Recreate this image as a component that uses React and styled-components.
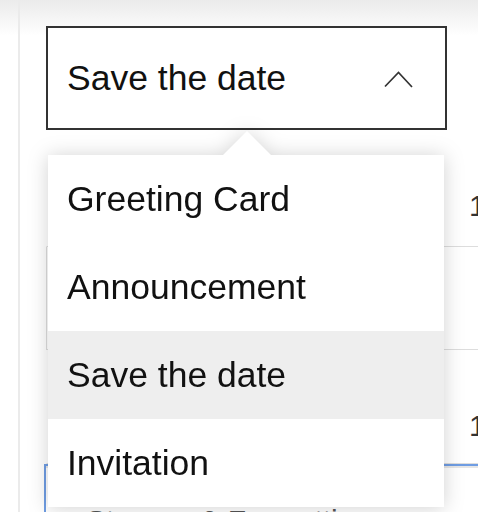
import React from "react";
import styled, { createGlobalStyle } from "styled-components";

const Global = createGlobalStyle`
  html, body { margin: 0; padding: 0; overflow: hidden; background: #fff; }
  body { font-family: "Liberation Sans", Arial, sans-serif; }
`;

const Page = styled.div`
  width: 478px;
  height: 512px;
  overflow: hidden;
  display: flex;
  background: linear-gradient(#ebebeb 0px, #ffffff 36px);
`;

const Gutter = styled.div`
  width: 18px;
  flex: none;
`;

const Main = styled.main`
  flex: 1;
  min-width: 0;
  border-left: 2px solid #ebebeb;
  padding: 26px 0 0 26px;
`;

const Field = styled.div`
  position: relative;
  width: 401px;
  z-index: 2;
`;

const SelectBox = styled.div`
  box-sizing: border-box;
  height: 104px;
  border: 2px solid #333;
  background: #fff;
  display: flex;
  align-items: center;
  justify-content: space-between;
  padding: 0 31px 0 19px;
  font-size: 35.5px;
  color: #111;
`;

const Chevron = styled.svg`
  width: 30px;
  height: 17px;
  margin-top: 3px;
`;

const Menu = styled.ul`
  position: absolute;
  top: calc(100% + 25px);
  left: 2px;
  width: 396px;
  margin: 0;
  padding: 0;
  list-style: none;
  background: #fff;
  filter: drop-shadow(0 1px 10px rgba(0, 0, 0, 0.18));
`;

const Caret = styled.span`
  position: absolute;
  top: -24px;
  left: 175px;
  width: 0;
  height: 0;
  border-left: 24px solid transparent;
  border-right: 24px solid transparent;
  border-bottom: 24px solid #fff;
`;

const Item = styled.li`
  height: 88px;
  display: flex;
  align-items: center;
  padding-left: 19px;
  font-size: 35.5px;
  color: #111;
  background: ${(p) => (p.$active ? "#eeeeee" : "#ffffff")};
`;

const List = styled.div`
  width: 600px;
`;

const Row = styled.div`
  box-sizing: border-box;
  height: ${(p) => p.$h}px;
  display: grid;
  grid-template-columns: 422px 1fr;
  align-items: start;
  padding-top: 61px;
  border-bottom: 1px solid #dddddd;
  border-left: 1px solid ${(p) => (p.$marked ? "#dddddd" : "transparent")};
`;

const Qty = styled.span`
  grid-column: 2;
  font-size: 30px;
  line-height: 30px;
  color: #333;
`;

const Card = styled.div`
  margin-left: -2px;
  height: 60px;
  border-top: 2px solid #6f9de3;
  border-left: 2px solid #6f9de3;
  box-shadow: 0 2px 0 #e6e6e6 inset;
  padding: 40px 0 0 40px;
  font-size: 30px;
  line-height: 30px;
  color: #555;
  white-space: nowrap;
`;

const options = ["Greeting Card", "Announcement", "Save the date", "Invitation"];

export default function App() {
  const selected = "Save the date";
  return (
    <>
      <Global />
      <Page>
        <Gutter />
        <Main>
          <Field>
            <SelectBox>
              <span>{selected}</span>
              <Chevron viewBox="0 0 30 17" fill="none">
                <polyline
                  points="1,15.5 14.5,1.5 28,16"
                  stroke="#333"
                  strokeWidth="1.7"
                />
              </Chevron>
            </SelectBox>
            <Menu>
              <Caret />
              {options.map((o) => (
                <Item key={o} $active={o === selected}>
                  {o}
                </Item>
              ))}
            </Menu>
          </Field>
          <List>
            <Row $h={117}>
              <Qty>1</Qty>
            </Row>
            <Row $h={103} $marked />
            <Row $h={114}>
              <Qty>1</Qty>
            </Row>
          </List>
          <Card>Storage &amp; Formatting</Card>
        </Main>
      </Page>
    </>
  );
}
